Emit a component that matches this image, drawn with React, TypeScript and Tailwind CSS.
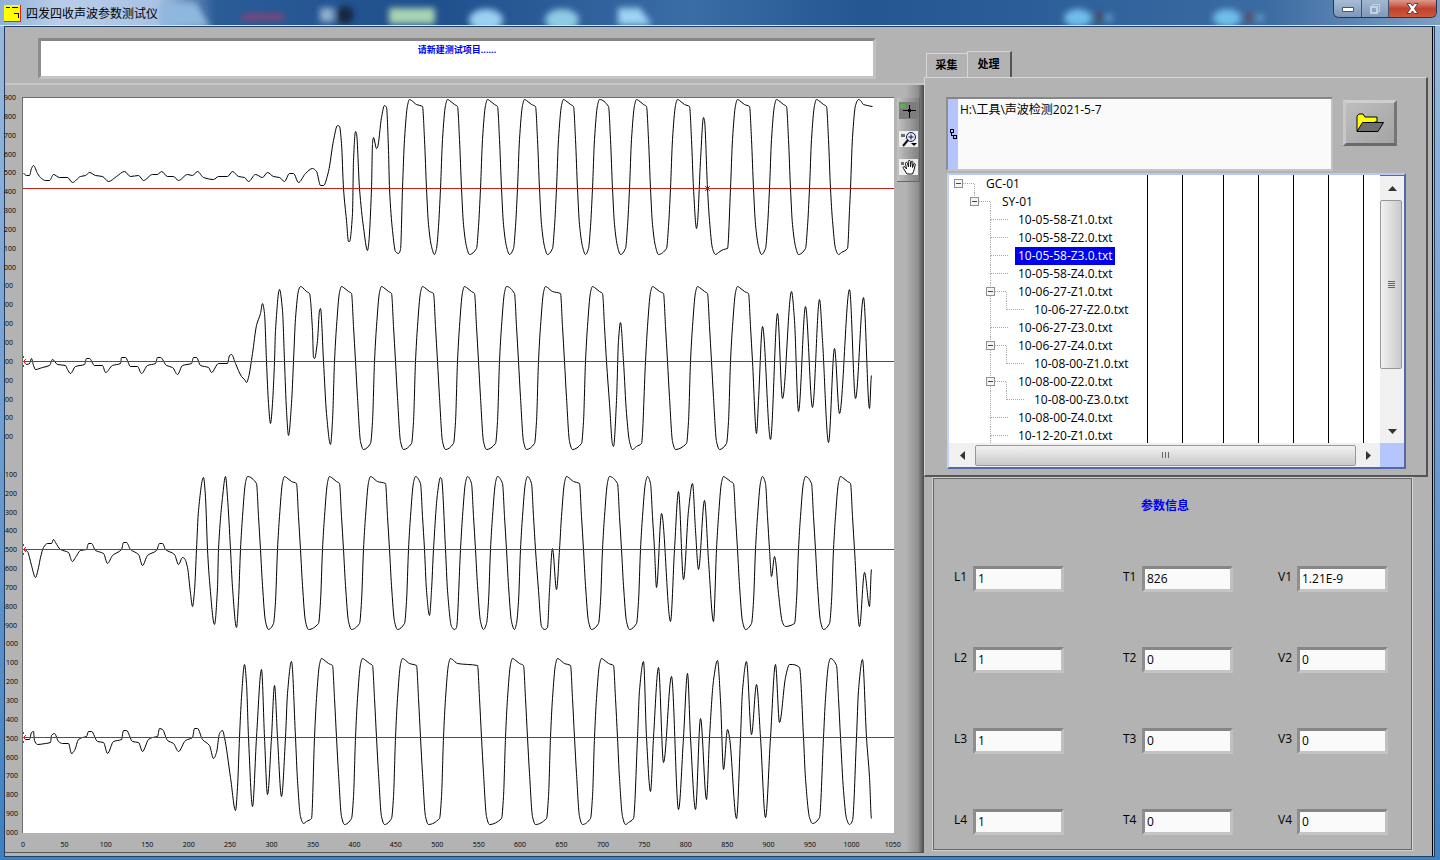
import { useState } from "react";
import { twMerge } from "tailwind-merge";

type Point = [number, number];

// a string holds plain "x,y" points, an array holds [rise, fall] pairs of clipped pulses
interface Trace {
  top: number;
  mid: number;
  bottom: number;
  parts: (string | Point[])[];
}

const TRACES: Trace[] = [
  {
    top: 99,
    mid: 188,
    bottom: 254,
    parts: [
      "23,173 26,175 29,175 31,168 33,165 37,173 41,178 45,180 49,180 53,174 59,177 67,177 72,182 80,176 85,175 89,172 95,175 102,176 108,181 116,176 124,171 130,176 138,175 143,180 152,174 157,174 161,171 167,176 173,176 178,180 187,174 192,175 197,171 203,177 213,179 218,176 227,176 232,171 238,176 244,177 248,181 255,174 262,177 267,172 273,176 279,177 284,181 289,173 293,173 298,182 305,173 312,168 316,171 320,185 323,185 328,171 333,140 337,125 339,126 341,143 343,188 346,220 348,241 349,241 352,213 353,160 355,131 356,133 359,188 363,227 367,250 368,245 371,188 372,143 373,137 376,148 377,147 381,117 384,105 386,107 388,150 389,188 392,230 395,251 398,253 400,249",
      [[402, 426], [440, 461], [480, 501], [517, 539], [556, 577], [592, 612], [629, 650], [670, 693]],
      "696,228 697,222 700,160 703,117 704,120 707,188 709,220 712,248 715,254 718,252 723,249 727,248",
      [[730, 753], [769, 790], [809, 830]],
      "832,220 835,248 838,254 841,252 847,248 849,210 850,188 852,137 855,105 858,99 860,100 863,104 867,105 872,106",
    ],
  },
  {
    top: 286,
    mid: 361,
    bottom: 449,
    parts: [
      "23,361 26,364 29,363 31,358 33,365 35,369 42,367 49,365 52,359 57,364 65,365 67,369 70,373 75,366 84,364 86,358 89,358 94,365 102,365 105,372 112,365 120,363 121,357 125,357 130,366 137,366 141,373 147,365 155,363 157,357 160,357 166,365 172,367 177,374 182,365 191,363 193,357 196,357 200,365 208,367 211,372 218,363 227,363 229,355 231,354 235,363 241,376 244,379 246,382 248,377 252,353 256,325 260,313 262,303 264,313 266,361 268,403 270,423 272,403 274,361 275,330 279,289 282,310 284,361 286,410 288,435 291,403 293,361 295,318 298,290 300,286 302,287 306,291 309,293 312,330 313,357 314,358 317,340 319,310 320,308 323,361 326,413 330,444 332,420",
      [[334, 355], [374, 395], [415, 437], [457, 478], [499, 518], [538, 564], [585, 606]],
      "609,403 612,444 613,446 616,400 618,340 620,322 623,361 626,413 629,441 632,449 636,446 641,443",
      [[645, 667], [690, 711], [730, 752]],
      "756,433 758,400 762,326 770,439 777,313 782,398 791,291 794,320 798,411 805,306 812,407 819,299 822,340 828,442 834,348 839,413 849,289 855,398 863,297 869,408 871,375",
    ],
  },
  {
    top: 476,
    mid: 549,
    bottom: 629,
    parts: [
      "23,549 27,551 29,557 31,565 35,577 38,567 40,557 43,547 47,543 51,543 53,539 55,542 60,549 68,552 71,560 72,561 75,557 80,550 86,549 88,543 91,543 95,550 103,553 107,563 112,555 121,549 123,542 126,542 130,549 138,554 142,565 147,555 156,550 159,543 162,543 165,549 174,554 178,564 182,557 184,558 187,567 190,593 192,606 194,590 196,549 198,510 203,477 205,497 207,549 209,580 214,624 217,587 218,549 222,497 225,476 227,497 230,549 232,587 236,627 238,600",
      [[240, 260], [277, 300], [322, 343], [363, 389], [408, 424]],
      "426,590 429,615 431,590 433,549 437,493 440,477 441,478 445,549 447,590 451,626 454,629 456,627",
      [[460, 475], [490, 506], [520, 535]],
      "538,590 541,626 544,629 547,627 549,590 552,548 556,589",
      [[559, 583], [602, 621], [640, 654]],
      "656,587 661,513 670,621 674,549 678,491 683,579 688,510 692,483 695,530 698,569 704,500 708,560 713,621",
      [[716, 737], [755, 769]],
      "771,576 774,556 775,560 778,593 782,622 785,626 794,623 796,600",
      [[798, 815], [833, 854]],
      "859,626 864,572 869,606 871,569",
    ],
  },
  {
    top: 658,
    mid: 737,
    bottom: 824,
    parts: [
      "23,737 25,739 29,739 31,732 33,731 34,740 37,744 45,743 50,742 51,735 54,733 58,741 62,743 68,743 71,753 74,750 78,739 82,737 86,736 88,731 91,731 97,741 103,742 107,753 113,741 121,739 123,730 126,730 132,741 138,742 142,751 148,739 152,737 157,736 159,728 162,729 167,740 173,743 178,751 185,740 192,737 194,728 197,728 202,739 209,745 213,758 216,752 219,733 222,730 224,737 230,777 235,810 237,787 239,737 241,697 244,664 246,683 248,737 252,806 256,737 261,669 264,737 267,794 271,737 274,685 277,737 281,796 285,737 287,693 291,661 295,737 297,780 300,816 303,823 306,821 311,818",
      [[314, 336], [355, 376], [395, 420], [443, 481], [505, 527], [550, 574], [594, 617]],
      "619,778 622,816 625,824 628,822 633,818 637,737 639,690 643,661 646,737 650,791 653,737 658,667 663,762 671,676 678,809 683,737 687,673 690,737 695,809 700,718 706,799 709,737 713,680 717,660 720,700 723,769 727,729 729,737 736,818 740,737 742,690 746,661 751,734 756,684 760,737 765,817 770,737 775,664 779,722 785,677 789,664 792,664 799,667 803,737 805,778 809,817 812,823 819,817",
      [[823, 840]],
      "843,790 846,818 849,824 852,820 856,737 858,690 862,659 866,737 869,777 871,818",
    ],
  },
];

const MARKERS: Point[] = [[707, 188], [23, 361], [23, 549], [23, 737]];

function pulses(pairs: Point[], { top, mid, bottom }: Trace): Point[] {
  const out: Point[] = [];
  pairs.forEach(([rise, fall], i) => {
    if (i > 0) out.push([rise - 4, bottom - 6], [rise - 2, bottom - 28]);
    out.push([rise, mid], [rise + 2, top + 40], [rise + 5, top + 6], [rise + 7, top]);
    if (fall - rise > 20) out.push([rise + 9, top + 1], [rise + 14, top + 5]);
    out.push([fall - 4, top + 7], [fall - 2, top + 40], [fall, mid]);
    if (i < pairs.length - 1) out.push([fall + 2, mid + 36], [fall + 5, bottom - 8], [fall + 8, bottom]);
  });
  return out;
}

function toPoints(trace: Trace): Point[] {
  return trace.parts.flatMap((part) =>
    typeof part === "string"
      ? part.split(" ").map((p) => p.split(",").map(Number) as Point)
      : pulses(part, trace)
  );
}

// monotone cubic, flat at every peak and dip
function toPath(points: Point[]) {
  const slope = (i: number) =>
    (points[i + 1][1] - points[i][1]) / (points[i + 1][0] - points[i][0]);
  const tangent = (i: number) => {
    if (i === 0 || i === points.length - 1) return 0;
    const a = slope(i - 1);
    const b = slope(i);
    return a * b <= 0 ? 0 : (2 * a * b) / (a + b);
  };
  let d = `M${points[0][0]} ${points[0][1]}`;
  for (let i = 0; i < points.length - 1; i++) {
    const [x0, y0] = points[i];
    const [x1, y1] = points[i + 1];
    const h = (x1 - x0) / 3;
    d += `C${x0 + h} ${y0 + h * tangent(i)} ${x1 - h} ${y1 - h * tangent(i + 1)} ${x1} ${y1}`;
  }
  return d;
}

const Waveforms = () => (
  <svg
    viewBox="23 98 871 735"
    preserveAspectRatio="none"
    className="block h-full w-full"
    fill="none"
    role="img"
    aria-label="波形"
  >
    {TRACES.map((trace) => (
      <g key={trace.mid}>
        <path d={toPath(toPoints(trace))} transform="translate(.5 .5)" stroke="#000" />
        <rect x="23" y={trace.mid} width="871" height="1" fill="#c4201c" />
      </g>
    ))}
    {MARKERS.map(([x, y]) => (
      <path
        key={y}
        d={`M${x - 2} ${y - 2}l5 5M${x + 3} ${y - 2}l-5 5M${x + 0.5} ${y - 5}v2M${x + 0.5} ${y + 4}v2`}
        stroke="#d02020"
      />
    ))}
  </svg>
);

const X_TICKS = Array.from({ length: 22 }, (_, i) => i * 50);
const Y_TICKS = Array.from({ length: 40 }, (_, i) => i * 100 - 1900);

// the scale has room for the last digits only
function yTickText(value: number) {
  if (value === 0) return "";
  return String(value).slice(value > -1000 && value < 0 ? -2 : -3);
}

function yTickClass(value: number) {
  if (value <= -1000) return "mr-[6px]";
  if (value < 0) return "mr-[9px]";
  if (value < 1000) return "mr-[5px]";
  return "mr-[4px]";
}

const bevel =
  "border-t-[#868686] border-l-[#8e8e8e] border-b-[#c4c4c4] border-r-[#c0c0c0]";

const Palette = () => (
  <div className="flex h-[84px] w-[23px] flex-col items-center gap-[12px] border-r border-b border-[#666] bg-linear-to-r from-[#c4c4c4] to-[#808080] pt-[4px]">
    <button aria-label="光标" className="h-[17px] w-[19px] bg-[#7d7d7d]">
      <svg viewBox="0 0 19 17" className="h-full w-full" shapeRendering="crispEdges">
        <path d="M1 2h5v4H1z" fill="#5fae4f" />
        <path d="M4 8.500h5M11 8.500h6M10.500 3v5M10.500 10v6" stroke="#000" />
        <path d="M9 7h3v3H9z" fill="#000" />
      </svg>
    </button>
    <button aria-label="缩放" className="h-[16px] w-[19px] bg-[#efefef]">
      <svg viewBox="0 0 19 16" className="h-full w-full" fill="none">
        <path d="M2 3h4v3H2z" fill="#667266" />
        <circle cx="12" cy="6" r="4.500" fill="#dfe6ff" stroke="#15153a" />
        <path d="M12 3.500v5M9.500 6h5" stroke="#15153a" />
        <path d="M9 9l-5 6" stroke="#111" strokeWidth="2" />
        <path d="M12 12h6l-3 3z" fill="#000" />
      </svg>
    </button>
    <button aria-label="平移" className="h-[16px] w-[19px] bg-[#efefef]">
      <svg viewBox="0 0 19 16" className="h-full w-full" fill="#fff" stroke="#111">
        <path d="M2 3h3v3H2z" fill="#667266" stroke="none" />
        <path d="M8 15L4.500 9.500C3.500 8 5 7 6 8l1.500 2L6.500 4.500c0-1.500 1.500-1.500 2 0L9.500 8 9.300 2.500c0-1.500 1.800-1.500 2 0L11.500 8l.7-5c.3-1.300 1.800-1 1.700.3L13.500 8.500l1.200-3.300c.5-1.200 1.800-.8 1.500.5L15 11l-1.500 4z" />
      </svg>
    </button>
  </div>
);

const Chart = () => (
  <section className="mt-[4px] border-t-2 border-b border-t-[#c6c6c6] border-b-[#555] bg-[linear-gradient(to_right,#b3b3b3_calc(100%-18px),#8f8f8f_calc(100%-6px),#4c4c4c)] pt-[12px]">
    <div className="flex pr-[4px]">
      <div className="flex h-[736px] w-[17px] flex-col justify-between text-[7px] leading-none">
        {Y_TICKS.map((value) => (
          <span
            key={value}
            className={twMerge("flex h-px items-center justify-end", yTickClass(value))}
          >
            {yTickText(value)}
          </span>
        ))}
      </div>
      <div className="h-[736px] min-w-0 flex-1 border-t border-l border-[#6e6e6e] bg-white">
        <Waveforms />
      </div>
      <div className="ml-[3px] pt-px">
        <Palette />
      </div>
    </div>
    <div className="mr-[31px] ml-[18px] flex h-[19px] items-center justify-between pt-[3px] text-[7px] leading-none">
      {X_TICKS.map((value) => (
        <span key={value} className="flex w-0 justify-center">
          {value}
        </span>
      ))}
    </div>
  </section>
);

interface TreeItem {
  depth: number;
  label: string;
  open?: boolean;
}

const TREE: TreeItem[] = [
  { depth: 0, label: "GC-01", open: true },
  { depth: 1, label: "SY-01", open: true },
  { depth: 2, label: "10-05-58-Z1.0.txt" },
  { depth: 2, label: "10-05-58-Z2.0.txt" },
  { depth: 2, label: "10-05-58-Z3.0.txt" },
  { depth: 2, label: "10-05-58-Z4.0.txt" },
  { depth: 2, label: "10-06-27-Z1.0.txt", open: true },
  { depth: 3, label: "10-06-27-Z2.0.txt" },
  { depth: 2, label: "10-06-27-Z3.0.txt" },
  { depth: 2, label: "10-06-27-Z4.0.txt", open: true },
  { depth: 3, label: "10-08-00-Z1.0.txt" },
  { depth: 2, label: "10-08-00-Z2.0.txt", open: true },
  { depth: 3, label: "10-08-00-Z3.0.txt" },
  { depth: 2, label: "10-08-00-Z4.0.txt" },
  { depth: 2, label: "10-12-20-Z1.0.txt" },
];

const TreeLines = ({ depth, open }: TreeItem) => {
  const x = 9.5 + depth * 16;
  const width = 34 + depth * 16;
  return (
    <svg width={width} height={18} className="shrink-0" fill="none" shapeRendering="crispEdges">
      <g stroke="#aaa" strokeDasharray="1 1">
        {depth > 0 && <path d={`M${x} 0V9`} />}
        {depth === 2 && <path d={`M${x} 9V18`} />}
        {depth === 3 && <path d={`M${x - 16} 0V18`} />}
        {open ? <path d={`M${x} 8.500H${x + 16}V18`} /> : <path d={`M${x} 8.500H${x + 17}`} />}
      </g>
      {open && (
        <>
          <rect x={x - 4} y={4.5} width={8} height={8} fill="#f4f4f4" stroke="#8b8f9e" />
          <path d={`M${x - 2.5} 8.500h5`} stroke="#33466f" />
        </>
      )}
    </svg>
  );
};

const COLUMNS = [
  "w-[35px]",
  "w-[41px]",
  "w-[35px]",
  "w-[35px]",
  "w-[35px]",
  "w-[35px]",
];

const Arrow = ({ d }: { d: string }) => (
  <svg width="9" height="9" viewBox="0 0 9 9">
    <path d={d} fill="#333" />
  </svg>
);

const FileTree = () => {
  const [selected, setSelected] = useState("10-05-58-Z3.0.txt");
  return (
    <div className="mt-[2px] mr-[20px] ml-[22px] border-2 border-t-[#b8c8f8] border-r-[#5468a8] border-b-[#5468a8] border-l-[#c4d2fa] bg-white">
      <div className="flex h-[268px]">
        <div className="flex min-w-0 flex-1 overflow-hidden">
          <ul className="w-[199px] shrink-0 overflow-hidden border-r border-black">
            {TREE.map((item) => (
              <li key={item.label} className="flex h-[18px]">
                <TreeLines {...item} />
                <button
                  onClick={() => setSelected(item.label)}
                  className={twMerge(
                    "h-[18px] pr-[3px] pl-[3px] text-[12px] leading-[18px] whitespace-nowrap",
                    item.label === selected && "bg-[#0000f0] text-white"
                  )}
                >
                  {item.label}
                </button>
              </li>
            ))}
          </ul>
          {COLUMNS.map((width, i) => (
            <div key={i} className={twMerge("shrink-0 border-r border-black", width)} />
          ))}
        </div>
        <div className="flex w-[24px] flex-col border-t border-[#5468a8] bg-[#f0f0f0]">
          <button aria-label="向上" className="flex h-[24px] items-center justify-center">
            <Arrow d="M0 7L4.500 2L9 7z" />
          </button>
          <div className="flex h-[169px] w-[22px] flex-col items-center justify-center gap-px rounded-xs border border-[#979797] bg-linear-to-r from-[#f2f2f2] to-[#c9c9cc]">
            <span className="h-px w-[7px] bg-[#666]" />
            <span className="h-px w-[7px] bg-[#666]" />
            <span className="h-px w-[7px] bg-[#666]" />
            <span className="h-px w-[7px] bg-[#666]" />
          </div>
          <button aria-label="向下" className="mt-auto flex h-[24px] items-center justify-center">
            <Arrow d="M0 2L4.500 7L9 2z" />
          </button>
        </div>
      </div>
      <div className="flex h-[24px] bg-[#f0f0f0]">
        <button aria-label="向左" className="flex w-[26px] items-center justify-center">
          <Arrow d="M7 0L2 4.500L7 9z" />
        </button>
        <div className="flex h-[21px] flex-1 items-center justify-center gap-[2px] self-center rounded-xs border border-[#979797] bg-linear-to-b from-[#f2f2f2] to-[#c9c9cc]">
          <span className="h-[6px] w-px bg-[#666]" />
          <span className="h-[6px] w-px bg-[#666]" />
          <span className="h-[6px] w-px bg-[#666]" />
        </div>
        <button aria-label="向右" className="flex w-[24px] items-center justify-center">
          <Arrow d="M2 0L7 4.500L2 9z" />
        </button>
        <div className="w-[24px] bg-[#b4c6fc]" />
      </div>
    </div>
  );
};

const TabPanel = () => (
  <div>
    <div role="tablist" className="flex items-end pl-[2px] text-[11px] leading-none font-bold">
      <button
        role="tab"
        aria-selected="false"
        className="h-[24px] w-[41px] border-t border-l border-[#d6d6d6] pr-px pb-[2px]"
      >
        采集
      </button>
      <button
        role="tab"
        aria-selected="true"
        className="h-[26px] w-[45px] border-t border-r-2 border-l border-t-[#d6d6d6] border-r-[#555] border-l-[#d6d6d6] pr-px pb-[3px]"
      >
        处理
      </button>
    </div>
    <div className="mr-[4px] border-t border-r-2 border-b-2 border-l border-t-[#d6d6d6] border-r-[#555] border-b-[#555] border-l-[#d6d6d6] pt-[19px] pb-[6px]">
      <div className="flex gap-[10px] pr-[29px] pl-[21px]">
        <div className={twMerge("flex h-[74px] min-w-0 flex-1 border-2", bevel)}>
          <div className="flex w-[10px] items-center justify-center bg-[#b4c4fc]">
            <svg width="7" height="10" viewBox="0 0 7 10" fill="none" stroke="#000" shapeRendering="crispEdges">
              <path d="M.5.500h3v3h-3zM3.500 6.500h3v3h-3zM1.500 3.500v3h2" />
            </svg>
          </div>
          <textarea
            aria-label="路径"
            readOnly
            value="H:\工具\声波检测2021-5-7"
            className="min-w-0 flex-1 resize-none bg-[#fafafa] px-[2px] pt-[3px] text-[12px] leading-[16px] outline-none"
          />
        </div>
        <button
          aria-label="打开"
          className="mt-[3px] flex h-[46px] w-[54px] items-center justify-center border-3 border-t-[#cfcfcf] border-r-[#757575] border-b-[#6a6a6a] border-l-[#c8c8c8] bg-linear-to-br from-[#bdbdbd] to-[#a4a4a4]"
        >
          <svg width="28" height="20" viewBox="0 0 28 20" stroke="#000" strokeLinejoin="round">
            <path d="M1 18V3l2-2h4l2 3h12v5h-2L1 18z" fill="#ffff00" />
            <path d="M1 18.500L6.500 9.500h21L22 18.500z" fill="#6e6e6e" />
          </svg>
        </button>
      </div>
      <FileTree />
    </div>
  </div>
);

const PARAMS = [
  ["L1", "1"],
  ["T1", "826"],
  ["V1", "1.21E-9"],
  ["L2", "1"],
  ["T2", "0"],
  ["V2", "0"],
  ["L3", "1"],
  ["T3", "0"],
  ["V3", "0"],
  ["L4", "1"],
  ["T4", "0"],
  ["V4", "0"],
];

const ParamInfo = () => (
  <section className="mr-[19px] ml-[8px] border border-[#d0d0d0] border-r-[#d8d8d8]">
    <div className="border border-[#666] pt-[19px] pb-[14px]">
      <h2 className="pr-[15px] text-center text-[12px] leading-[16px] font-bold text-[#0000f0]">
        参数信息
      </h2>
      <div className="mt-[52px] grid grid-cols-[169px_155px_1fr] gap-y-[55px] pl-[20px]">
        {PARAMS.map(([label, value]) => (
          <div key={label} className="flex h-[26px]">
            <label htmlFor={label} className="w-[19px] text-[12px] leading-[22px]">
              {label}
            </label>
            <input
              id={label}
              defaultValue={value}
              className={twMerge(
                "w-[91px] border-3 bg-[#fafafa] px-[2px] text-[12px] outline-none",
                bevel
              )}
            />
          </div>
        ))}
      </div>
    </div>
  </section>
);

// what shows through the glass of the title bar
const GlassBackdrop = () => (
  <svg className="absolute inset-0 h-full w-full" aria-hidden="true">
    <defs>
      <filter id="glass">
        <feGaussianBlur stdDeviation="3" />
      </filter>
    </defs>
    <g filter="url(#glass)">
      <path d="M160 3h36l14 24h-50z" fill="#8fb8de" />
      <rect x="242" y="14" width="42" height="6" fill="#8d4272" />
      <rect x="320" y="8" width="14" height="14" fill="#8fb0cc" />
      <circle cx="345" cy="15" r="9" fill="#14283f" />
      <rect x="389" y="8" width="46" height="16" fill="#a9d3b4" />
      <ellipse cx="486" cy="20" rx="17" ry="11" fill="#9ad0f2" />
      <ellipse cx="562" cy="20" rx="17" ry="11" fill="#8fcbe4" />
      <path d="M618 8h22l12 17h-34z" fill="#9cd3f3" />
      <ellipse cx="1078" cy="18" rx="14" ry="9" fill="#6fbdea" />
      <circle cx="1099" cy="17" r="5" fill="#4c4a58" />
      <circle cx="1109" cy="18" r="4" fill="#5fa0cf" />
      <ellipse cx="1227" cy="18" rx="14" ry="9" fill="#6fbdea" />
      <circle cx="1249" cy="17" r="5" fill="#5d5060" />
      <circle cx="1260" cy="18" r="4" fill="#5fa0cf" />
    </g>
  </svg>
);

const TitleBar = () => (
  <header className="relative flex h-[26px] justify-between border-b border-[#dbe8f5] bg-[linear-gradient(to_right,#8fb0d8,#b9cde8_4%,#a8c2e2_11%,#2a5c98_15%,#1f4f8c_30%,#3a6ca6_48%,#245791_60%,#2c5f99_72%,#3b6ba2_88%,#7f9fc4)]">
    <GlassBackdrop />
    <div className="relative flex items-center gap-[5px] pt-[2px] pl-[4px]">
      <svg width="17" height="17" viewBox="0 0 17 17" shapeRendering="crispEdges" fill="none">
        <path d="M0 0h17v17H0z" fill="#ff0" />
        <path d="M16.500 0v16.500H0" stroke="#e02010" />
        <path d="M2 2.500h4M8 2.500h6M10 8.500h5M14.500 8v5" stroke="#000" />
      </svg>
      <h1 className="text-[12px] leading-[18px]">四发四收声波参数测试仪</h1>
    </div>
    <div className="relative mr-[3px] flex h-[18px] overflow-hidden rounded-b-md border border-t-0 border-[#25364f]">
      <button
        aria-label="最小化"
        className="flex w-[28px] items-center justify-center border-r border-[#3c5270] bg-linear-to-b from-[#a9bdd6] to-[#7d97b8]"
      >
        <svg width="12" height="6" viewBox="0 0 12 6">
          <path d="M.5 1.500h11v4H.5z" fill="#fff" stroke="#4a5568" />
        </svg>
      </button>
      <button
        aria-label="还原"
        className="flex w-[27px] items-center justify-center border-r border-[#3c5270] bg-linear-to-b from-[#a3b7d0] to-[#8099b8]"
      >
        <svg width="12" height="12" viewBox="0 0 12 12" fill="none" stroke="#c4d2e4">
          <path d="M3.500 3V1.500h7v7H9" />
          <path d="M2 4h6v6H2z" strokeWidth="2" />
        </svg>
      </button>
      <button
        aria-label="关闭"
        className="flex w-[47px] items-center justify-center bg-linear-to-b from-[#dc9a8e] via-[#c2402c] to-[#cc5a3c]"
      >
        <svg width="13" height="11" viewBox="0 0 13 11">
          <path d="M1 .5h3.500l2 2.500 2-2.500H12L8.500 5.500l3.500 5H8.500l-2-2.500-2 2.500H1l3.500-5z" fill="#fff" stroke="#5a3a40" />
        </svg>
      </button>
    </div>
  </header>
);

const App = () => {
  return (
    <div className="flex min-h-screen flex-col bg-linear-to-b from-[#9dbadc] to-[#3f80c0] font-['Open_Sans','Noto_Sans_CJK_SC',sans-serif] text-black">
      <TitleBar />
      <div className="mr-[5px] mb-[3px] ml-[4px] flex flex-1 border border-[#1f3f66] bg-[#b3b3b3]">
        <main className="min-w-0 flex-1 pt-[11px] pb-[3px]">
          <div
            className={twMerge(
              "mr-[48px] ml-[33px] h-[41px] border-3 bg-white pt-[3px] text-center text-[9px] leading-[12px] font-bold text-[#0000f0]",
              bevel
            )}
          >
            请新建测试项目......
          </div>
          <Chart />
        </main>
        <aside className="mr-px w-[509px] shrink-0 border-r border-black pt-[24px]">
          <TabPanel />
          <ParamInfo />
        </aside>
      </div>
    </div>
  );
};

export default App;
